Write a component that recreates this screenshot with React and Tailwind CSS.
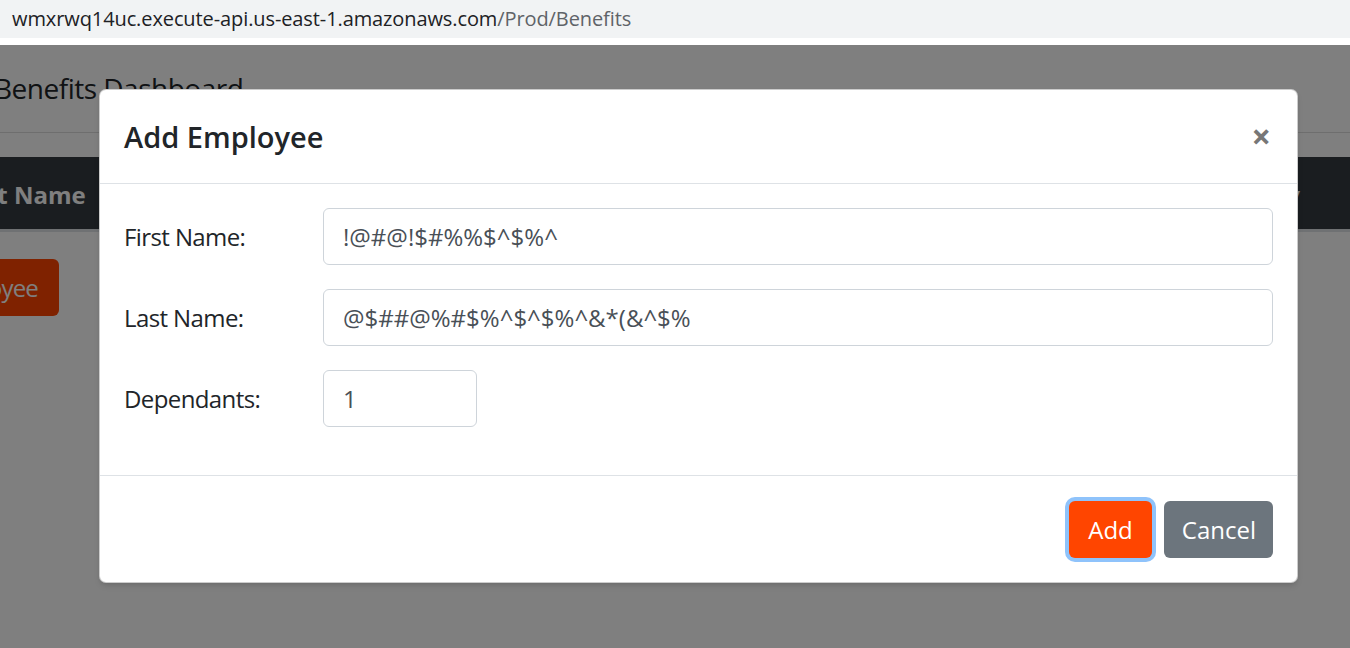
import React from 'react'

const font = { fontFamily: '"Open Sans", "Noto Sans", sans-serif' }

const Field = ({ label, value, narrow }) => (
  <div className="flex items-center">
    <label className="w-[199px] shrink-0 text-[24px] tracking-[-0.6px] text-[#212529]">{label}</label>
    <div
      className={`h-[57px] flex items-center px-[19px] border border-[#ced4da] rounded-[6px] bg-white text-[24px] text-[#495057] ${narrow ? 'w-[154px]' : 'flex-1'}`}
    >
      {value}
    </div>
  </div>
)

export default function App() {
  return (
    <div className="w-[1350px] h-[648px] overflow-hidden bg-white" style={font}>
      {/* Address bar */}
      <div className="h-[38px] bg-[#f1f3f4] flex items-center pl-[12px] text-[20px] tracking-[-0.1px] text-[#202124]">
        wmxrwq14uc.execute-api.us-east-1.amazonaws.com<span className="text-[#5f6368]">/Prod/Benefits</span>
      </div>
      <div className="h-[7px] bg-white" />

      {/* Page under the modal */}
      <div className="relative h-[603px] bg-white">
        <div className="ml-[-6px]">
          <div className="pt-[29px] h-[87px] text-[28px] tracking-[-0.5px] text-[#212529] leading-none">Benefits Dashboard</div>
          <div className="border-t border-[#dcdcdc]" />
          <div className="mt-[24px] h-[75px] bg-[#343a40] flex items-center justify-between pr-[50px] border-b-[3px] border-[#dee2e6]">
            <span className="ml-[-40px] mt-[3px] text-[24px] font-bold text-white">First Name</span>
            <span className="mt-[3px] text-[24px] font-bold text-white">y</span>
          </div>
          <div className="mt-[27px] flex">
            <div className="ml-[-100px] h-[57px] w-[165px] bg-[#ff4500] rounded-[6px] flex items-center justify-end pr-[21px] text-[24px] tracking-[-0.8px] text-white">
              Employee
            </div>
          </div>
        </div>

        {/* Backdrop */}
        <div className="absolute inset-0 bg-black/50" />

        {/* Modal */}
        <div className="absolute left-[99px] top-[44px] w-[1199px] h-[494px] bg-white rounded-[7px] border border-black/20 shadow-md flex flex-col">
          <div className="h-[94px] shrink-0 flex items-center justify-between px-[24px] border-b border-[#dee2e6]">
            <h5 className="text-[29px] font-semibold text-[#212529]">Add Employee</h5>
            <span className="text-[34px] font-bold text-[#777] leading-none mr-[2px] mt-[-2px]">×</span>
          </div>
          <div className="flex-1 px-[24px] pt-[24px] flex flex-col gap-[24px]">
            <Field label="First Name:" value="!@#@!$#%%$^$%^" />
            <Field label="Last Name:" value="@$##@%#$%^$^$%^&*(&^$%" />
            <Field label="Dependants:" value="1" narrow />
          </div>
          <div className="h-[107px] shrink-0 border-t border-[#dee2e6] flex items-center justify-end gap-[12px] px-[24px] pt-[1px]">
            <button className="h-[57px] px-[19px] bg-[#ff4500] text-white text-[24px] rounded-[6px] ring-[4px] ring-[#8fc3fb]">
              Add
            </button>
            <button className="h-[57px] pl-[18px] pr-[17px] bg-[#6c757d] text-white text-[24px] rounded-[6px]">
              Cancel
            </button>
          </div>
        </div>
      </div>
    </div>
  )
}
